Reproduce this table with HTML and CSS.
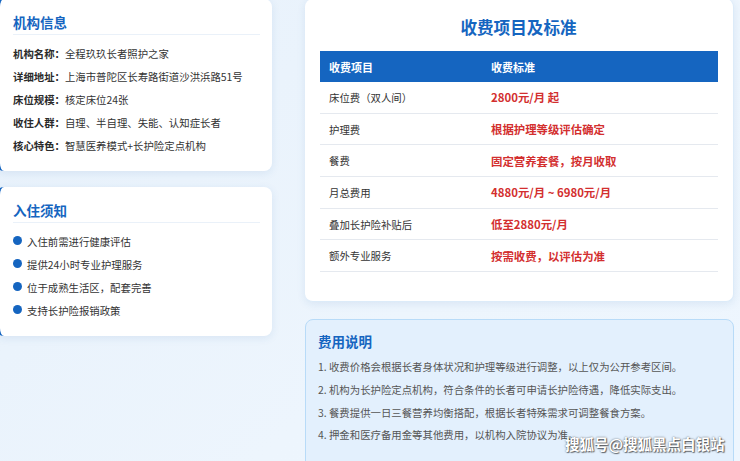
FILE: index.html
```html
<!DOCTYPE html>
<html lang="zh-CN">
<head>
<meta charset="utf-8">
<title>收费项目及标准</title>
<link rel="stylesheet" href="styles.css">
</head>
<body>
<div class="page">
  <div class="col-left">
    <section class="card card-side">
      <h2 class="card-title">机构信息</h2>
      <ul class="info-list">
        <li><span class="label">机构名称：</span>全程玖玖长者照护之家</li>
        <li><span class="label">详细地址：</span>上海市普陀区长寿路街道沙洪浜路51号</li>
        <li><span class="label">床位规模：</span>核定床位24张</li>
        <li><span class="label">收住人群：</span>自理、半自理、失能、认知症长者</li>
        <li><span class="label">核心特色：</span>智慧医养模式+长护险定点机构</li>
      </ul>
    </section>
    <section class="card card-side">
      <h2 class="card-title">入住须知</h2>
      <ul class="bullet-list">
        <li><span class="dot"></span>入住前需进行健康评估</li>
        <li><span class="dot"></span>提供24小时专业护理服务</li>
        <li><span class="dot"></span>位于成熟生活区，配套完善</li>
        <li><span class="dot"></span>支持长护险报销政策</li>
      </ul>
    </section>
  </div>
  <div class="col-right">
    <section class="card card-fee">
      <h1 class="fee-title">收费项目及标准</h1>
      <div class="table">
        <div class="tr th"><div>收费项目</div><div>收费标准</div></div>
        <div class="tr"><div class="item">床位费（双人间）</div><div class="price">2800元/月 起</div></div>
        <div class="tr"><div class="item">护理费</div><div class="price">根据护理等级评估确定</div></div>
        <div class="tr"><div class="item">餐费</div><div class="price">固定营养套餐，按月收取</div></div>
        <div class="tr"><div class="item">月总费用</div><div class="price">4880元/月 ~ 6980元/月</div></div>
        <div class="tr"><div class="item">叠加长护险补贴后</div><div class="price">低至2880元/月</div></div>
        <div class="tr"><div class="item">额外专业服务</div><div class="price">按需收费，以评估为准</div></div>
      </div>
    </section>
    <section class="card card-note">
      <h2 class="note-title">费用说明</h2>
      <ol class="note-list">
        <li>1. 收费价格会根据长者身体状况和护理等级进行调整，以上仅为公开参考区间。</li>
        <li>2. 机构为长护险定点机构，符合条件的长者可申请长护险待遇，降低实际支出。</li>
        <li>3. 餐费提供一日三餐营养均衡搭配，根据长者特殊需求可调整餐食方案。</li>
        <li>4. 押金和医疗备用金等其他费用，以机构入院协议为准。</li>
      </ol>
    </section>
  </div>
</div>
<div class="watermark">搜狐号@搜狐黑点白银站</div>
</body>
</html>
```
FILE: styles.css
```css
* { box-sizing: border-box; margin: 0; padding: 0; }
html, body { width: 740px; height: 461px; overflow: hidden; }
body {
  font-family: "Noto Sans CJK SC", "Noto Sans", sans-serif;
  color: #333;
  background: linear-gradient(135deg, #e7f1fb 0%, #edf5fd 60%, #eef6fe 100%);
  position: relative;
}
.page {
  display: flex;
  gap: 33px;
  margin-left: -4px;
  margin-top: -1px;
  align-items: flex-start;
}
.col-left { width: 276px; display: flex; flex-direction: column; gap: 16px; }
.col-right { width: 429px; display: flex; flex-direction: column; gap: 17px; }
.card {
  background: #fff;
  border-radius: 8px;
  box-shadow: 0 2px 8px rgba(40, 100, 170, 0.10);
}
.card-side {
  border-left: 4px solid #1565c0;
  padding: 13px 12px 14px 13px;
}
.card-title {
  font-size: 13.5px;
  line-height: 20px;
  font-weight: 700;
  color: #1565c0;
  padding-bottom: 2px;
  border-bottom: 1px solid #eaf1f9;
}
ul, ol { list-style: none; }
.info-list { margin-top: 7px; }
.info-list li {
  font-size: 10.4px;
  line-height: 23px;
  white-space: nowrap;
  color: #333;
}
.label { font-weight: 600; color: #2a2a2a; }
.bullet-list { margin-top: 7px; }
.bullet-list li {
  font-size: 10.4px;
  line-height: 23px;
  display: flex;
  align-items: center;
  gap: 5px;
}
.dot {
  width: 9px; height: 9px;
  border-radius: 50%;
  background: #1565c0;
  margin-top: -2px;
  flex: none;
}
.card-fee {
  padding: 16px 16px 29px 15px;
  border: 1px solid #dcebf9;
  border-left: 0; border-top: 0;
}
.fee-title {
  text-align: center;
  font-size: 16.6px;
  line-height: 24px;
  font-weight: 700;
  color: #1565c0;
  margin-bottom: 12px;
}
.table { width: 398px; }
.tr {
  display: grid;
  grid-template-columns: 162px 1fr;
  height: 31.7px;
  align-items: center;
  border-bottom: 1px solid #e5e9ef;
}
.tr > div { padding-left: 9px; }
.th {
  background: #1565c0;
  color: #fff;
  font-size: 11px;
  font-weight: 700;
  height: 31px;
  border-bottom: 0;
}
.item { font-size: 10.4px; color: #333; }
.price { font-size: 11.4px; font-weight: 700; color: #d32f2f; }
.card-note {
  background: #e3f0fd;
  border: 1px solid #b8dbf8;
  box-shadow: none;
  padding: 11px 12px 20px 12px;
  height: 160px;
}
.note-title {
  font-size: 13.5px;
  line-height: 20px;
  font-weight: 700;
  color: #1565c0;
  margin-bottom: 5px;
}
.note-list li {
  font-size: 10.4px;
  line-height: 22.7px;
  color: #555;
  white-space: nowrap;
}
.watermark {
  position: absolute;
  left: 565px;
  top: 434px;
  font-size: 14.5px;
  line-height: 20px;
  font-weight: 700;
  color: #fff;
  white-space: nowrap;
  text-shadow: 0 0 2px rgba(0,0,0,0.6), 1px 1px 1px rgba(0,0,0,0.5);
}
```
